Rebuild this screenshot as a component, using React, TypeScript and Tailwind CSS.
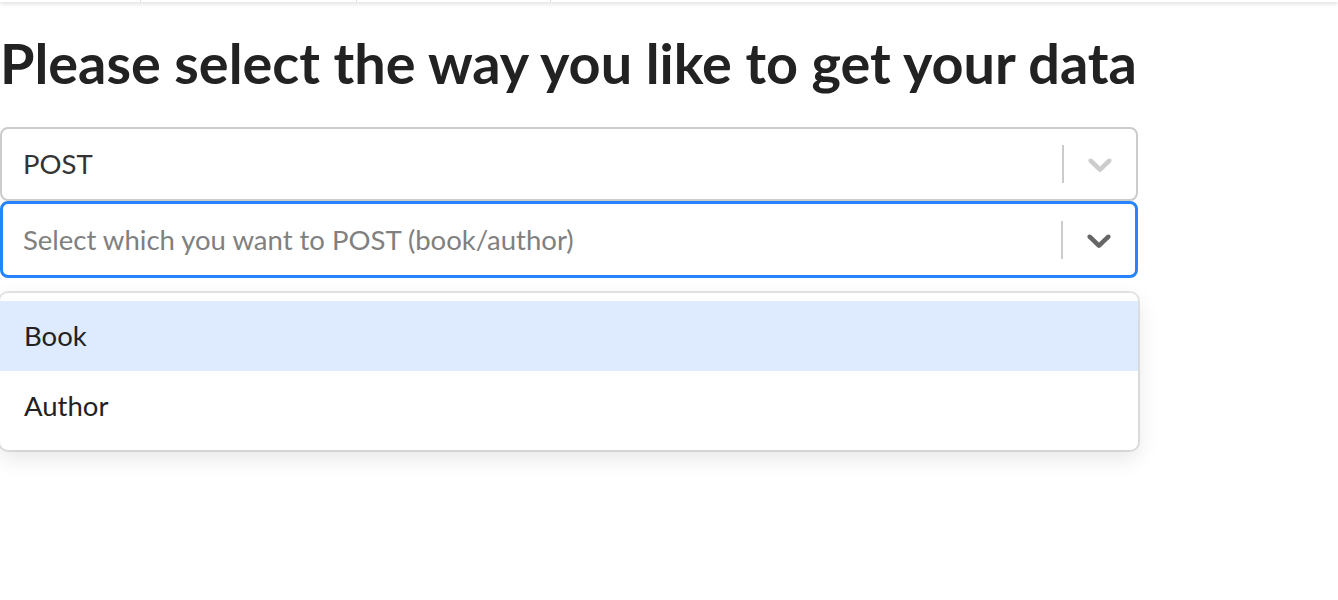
import { useState } from "react";

function Chevron({ className }: { className: string }) {
    return (
        <svg viewBox="0 0 20 20" className={className} fill="currentColor" aria-hidden="true">
            <path d="M4.516 7.548c0.436-0.446 1.043-0.481 1.576 0l3.908 3.747 3.908-3.747c0.533-0.481 1.141-0.446 1.574 0 0.436 0.445 0.408 1.197 0 1.615-0.406 0.418-4.695 4.502-4.695 4.502-0.217 0.223-0.502 0.335-0.787 0.335s-0.57-0.112-0.789-0.335c0 0-4.287-4.084-4.695-4.502s-0.436-1.17 0-1.615z" />
        </svg>
    );
}

export default function App() {
    const [hovered, setHovered] = useState("Book");
    const options = ["Book", "Author"];

    return (
        <div className="min-h-[600px] bg-white text-[#222]" style={{ fontFamily: "Lato, 'Open Sans', sans-serif" }}>
            {/* nav strip, scrolled mostly out of view */}
            <div className="flex h-[2px] w-full shadow-[0_1px_4px_rgba(0,0,0,0.25)] bg-white">
                <div className="w-[141px] border-r border-[#ddd]" />
                <div className="w-[216px] border-r border-[#ddd]" />
                <div className="w-[194px] border-r border-[#ddd]" />
                <div className="flex-1" />
            </div>

            <div className="w-[1138px]">
                <h1 className="mt-[27px] whitespace-nowrap text-[55.8px] font-bold leading-[67px]">
                    Please select the way you like to get your data
                </h1>

                <div className="mt-[31px] flex h-[74px] items-center rounded-[8px] border-2 border-[#ccc] bg-white">
                    <div className="flex-1 pl-[21px] text-[27.5px] text-[#333]">POST</div>
                    <div className="h-[38px] w-[2px] bg-[#ccc]" />
                    <div className="flex w-[72px] items-center justify-center">
                        <Chevron className="h-[40px] w-[40px] text-[#ccc]" />
                    </div>
                </div>

                <div className="flex h-[77px] items-center rounded-[8px] border-[3px] border-[#2684ff] bg-white">
                    <div className="flex-1 pl-[20px] text-[27.5px] text-[#808080]">
                        Select which you want to POST (book/author)
                    </div>
                    <div className="h-[38px] w-[2px] bg-[#ccc]" />
                    <div className="flex w-[72px] items-center justify-center">
                        <Chevron className="h-[40px] w-[40px] text-[#666]" />
                    </div>
                </div>

                <div className="mt-[15px] rounded-[8px] bg-white pb-[9px] pt-[8px] shadow-[0_0_0_2px_rgba(0,0,0,0.1),0_8px_22px_rgba(0,0,0,0.1)]">
                    {options.map((option) => (
                        <div
                            key={option}
                            onMouseEnter={() => setHovered(option)}
                            className={`flex h-[70px] items-center px-[24px] text-[27.5px] text-[#222] ${hovered === option ? "bg-[#deebff]" : "bg-white"}`}
                        >
                            {option}
                        </div>
                    ))}
                </div>
            </div>
        </div>
    );
}
